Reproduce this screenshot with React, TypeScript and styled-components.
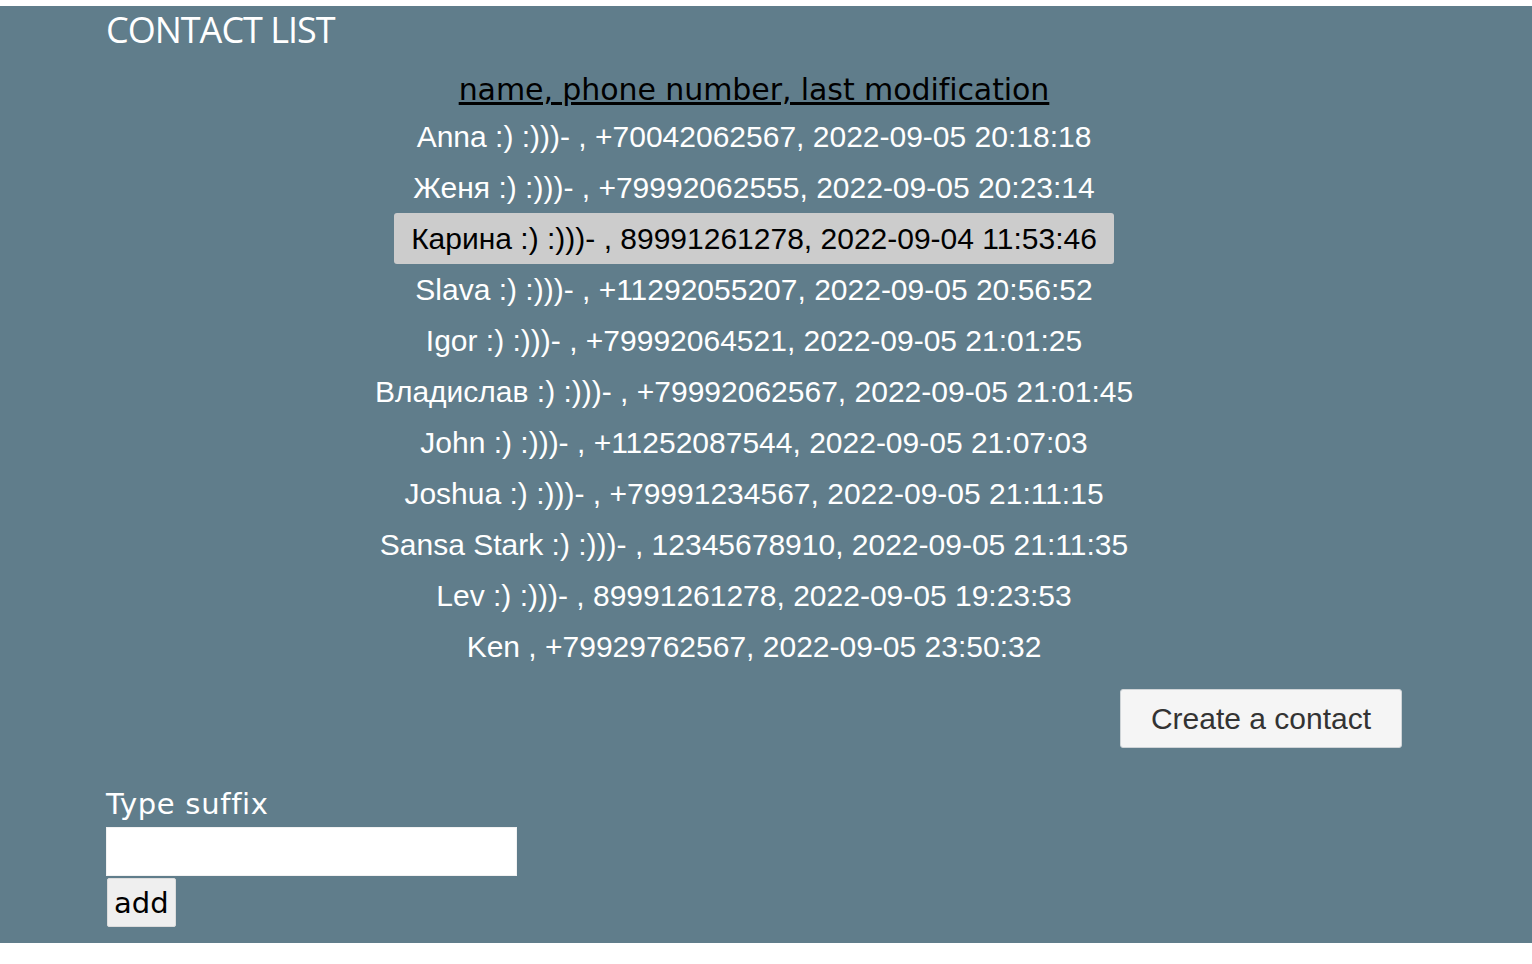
import React from 'react';
import styled, { createGlobalStyle } from 'styled-components';

interface IContact {
    name: string;
    phone: string;
    modified: string;
}

const contacts: IContact[] = [
    { name: 'Anna :) :)))-', phone: '+70042062567', modified: '2022-09-05 20:18:18' },
    { name: 'Женя :) :)))-', phone: '+79992062555', modified: '2022-09-05 20:23:14' },
    { name: 'Карина :) :)))-', phone: '89991261278', modified: '2022-09-04 11:53:46' },
    { name: 'Slava :) :)))-', phone: '+11292055207', modified: '2022-09-05 20:56:52' },
    { name: 'Igor :) :)))-', phone: '+79992064521', modified: '2022-09-05 21:01:25' },
    { name: 'Владислав :) :)))-', phone: '+79992062567', modified: '2022-09-05 21:01:45' },
    { name: 'John :) :)))-', phone: '+11252087544', modified: '2022-09-05 21:07:03' },
    { name: 'Joshua :) :)))-', phone: '+79991234567', modified: '2022-09-05 21:11:15' },
    { name: 'Sansa Stark :) :)))-', phone: '12345678910', modified: '2022-09-05 21:11:35' },
    { name: 'Lev :) :)))-', phone: '89991261278', modified: '2022-09-05 19:23:53' },
    { name: 'Ken', phone: '+79929762567', modified: '2022-09-05 23:50:32' },
];

const App: React.FC = () => {
    const [selected, setSelected] = React.useState<number>(2)
    const [suffix, setSuffix] = React.useState<string>('')

    return (
        <>
            <GlobalStyle />
            <Page>
                <Title>CONTACT LIST</Title>
                <List>
                    <Head>name, phone number, last modification</Head>
                    {contacts.map((c, i) => (
                        <Row key={i} $active={i === selected} onClick={() => setSelected(i)}>
                            {c.name} , {c.phone}, {c.modified}
                        </Row>
                    ))}
                </List>
                <Actions>
                    <CreateButton>Create a contact</CreateButton>
                </Actions>
                <SuffixForm onSubmit={(e) => e.preventDefault()}>
                    <Label htmlFor="suffix">Type suffix</Label>
                    <Input
                        id="suffix"
                        type="text"
                        value={suffix}
                        onChange={(e) => setSuffix(e.target.value)}
                    />
                    <AddButton type="submit">add</AddButton>
                </SuffixForm>
            </Page>
        </>
    );
};

const GlobalStyle = createGlobalStyle`
    body {
        margin: 0;
        padding-top: 6px;
        background: #ffffff;
    }
`

const Page = styled.div`
    box-sizing: border-box;
    height: 937px;
    background-color: #607d8b;
    padding: 4px 130px 0 106px;
`

const Title = styled.h1`
    margin: 0;
    font-family: "Open Sans", sans-serif;
    font-weight: 400;
    font-size: 36px;
    letter-spacing: -1px;
    line-height: 40px;
    color: #ffffff;
`

const List = styled.div`
    display: flex;
    flex-direction: column;
    align-items: center;
    margin-top: 22px;
`

const Head = styled.div`
    font-family: "DejaVu Sans", Verdana, sans-serif;
    font-size: 30px;
    letter-spacing: -0.08px;
    line-height: 36px;
    color: #000000;
    text-decoration: underline;
    margin-bottom: 3px;
`

const Row = styled.div<{ $active: boolean }>`
    font-family: "Liberation Sans", Arial, sans-serif;
    font-size: 30px;
    line-height: 35px;
    padding: 8px 17px;
    border-radius: 3px;
    cursor: pointer;
    white-space: nowrap;
    color: ${props => (props.$active ? '#000000' : '#ffffff')};
    background-color: ${props => (props.$active ? '#cccccc' : 'transparent')};
`

const Actions = styled.div`
    display: flex;
    justify-content: flex-end;
    margin-top: 17px;
`

const CreateButton = styled.button`
    box-sizing: border-box;
    height: 59px;
    width: 282px;
    padding: 0;
    font-family: "Liberation Sans", Arial, sans-serif;
    font-size: 30px;
    color: #333333;
    background-color: #f5f5f5;
    border: 1px solid #cfd4d7;
    border-radius: 3px;
    cursor: pointer;
`

const SuffixForm = styled.form`
    display: flex;
    flex-direction: column;
    align-items: flex-start;
    margin-top: 39px;
`

const Label = styled.label`
    font-family: "DejaVu Sans", Verdana, sans-serif;
    font-size: 29px;
    letter-spacing: 0.7px;
    line-height: 34px;
    color: #ffffff;
    margin-bottom: 6px;
`

const Input = styled.input`
    box-sizing: border-box;
    width: 411px;
    height: 49px;
    margin: 0;
    border: 1px solid #f2f2f2;
    background-color: #ffffff;
    outline: 0;
    font-size: 24px;
`

const AddButton = styled.button`
    box-sizing: border-box;
    height: 49px;
    margin: 2px 0 0 1px;
    padding: 0 6px;
    font-family: "DejaVu Sans", Verdana, sans-serif;
    font-size: 29px;
    color: #000000;
    background-color: #efefef;
    border: 1px solid #dcdcdc;
    border-radius: 2px;
    cursor: pointer;
`

export default App;
